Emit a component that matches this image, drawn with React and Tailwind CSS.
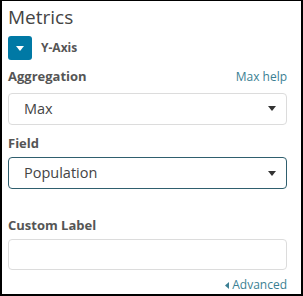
function Caret() {
  return (
    <svg width="8" height="5" viewBox="0 0 8 5" className="text-[#333]">
      <path d="M0 0h8L4 5z" fill="currentColor" />
    </svg>
  );
}

function SelectBox({ value, focused }) {
  return (
    <div
      className={`flex h-[32px] items-center justify-between rounded-[4px] border bg-white pl-[15px] pr-[10px] text-[14.5px] text-[#444] ${
        focused ? 'border-[#2f5f6e]' : 'border-[#dcdcdc]'
      }`}
    >
      <span>{value}</span>
      <Caret />
    </div>
  );
}

export default function App() {
  return (
    <div
      className="flex h-[296px] w-[303px] flex-col border-t border-l-2 border-r-2 border-b-2 border-black bg-white px-[6px] text-[#555]"
      style={{ fontFamily: '"Open Sans", sans-serif' }}
    >
      <h2 className="mt-[4px] text-[19px] leading-[24px] text-[#444]">Metrics</h2>

      <div className="mt-[7px] flex items-center gap-[9px]">
        <div className="flex h-[24px] w-[24px] items-center justify-center rounded-[3px] bg-[#0079a5]">
          <svg width="8" height="5" viewBox="0 0 8 5">
            <path d="M0 0h8L4 5z" fill="white" />
          </svg>
        </div>
        <span className="text-[12px] font-bold text-[#555]">Y-Axis</span>
      </div>

      <div className="mt-[7px] flex items-center justify-between pr-[8px]">
        <span className="text-[13px] font-bold text-[#555]">Aggregation</span>
        <span className="text-[12px] text-[#3b7f93]">Max help</span>
      </div>
      <div className="mt-[6px] mr-[8px]">
        <SelectBox value="Max" />
      </div>

      <div className="mt-[9px] text-[13px] font-bold text-[#555]">Field</div>
      <div className="mt-[4px] mr-[8px]">
        <SelectBox value="Population" focused />
      </div>

      <div className="mt-[27px] text-[13px] font-bold text-[#555]">Custom Label</div>
      <div className="mt-[3px] mr-[8px] h-[32px] rounded-[4px] border border-[#dcdcdc] bg-white" />

      <div className="mt-[6px] mr-[8px] flex items-center justify-end gap-[3px] text-[12px] text-[#3b7f93]">
        <svg width="4" height="7" viewBox="0 0 4 7">
          <path d="M4 0v7L0 3.5z" fill="currentColor" />
        </svg>
        <span>Advanced</span>
      </div>
    </div>
  );
}
